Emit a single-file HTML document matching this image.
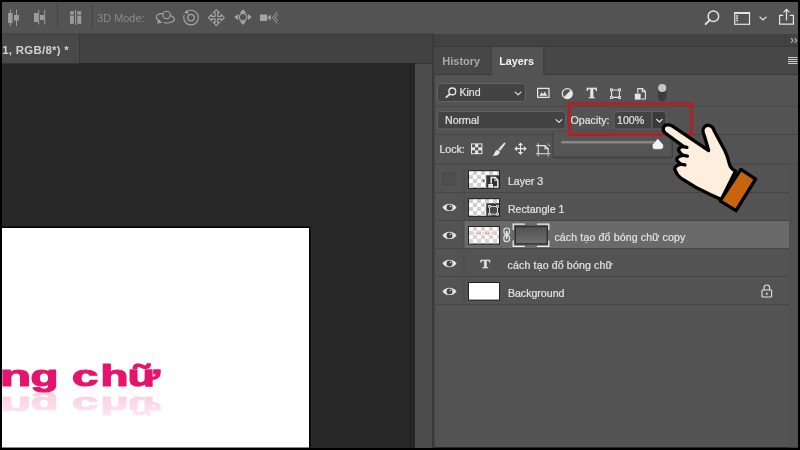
<!DOCTYPE html>
<html><head><meta charset="utf-8"><title>Layers</title>
<style>
html,body{margin:0;padding:0;background:#000;overflow:hidden}
body{width:800px;height:450px;position:relative;font-family:"Liberation Sans",sans-serif}
svg{position:absolute;left:0;top:0;display:block;will-change:transform}
text{font-family:"Liberation Sans",sans-serif;vector-effect:non-scaling-stroke}
.ui{font-size:10.6px;fill:#e4e4e4;stroke:#e4e4e4;stroke-width:0.200px}
.b{font-weight:bold}
</style></head><body>
<svg width="800" height="450" viewBox="0 0 800 450">
<defs>
<pattern id="chk" width="8" height="8" patternUnits="userSpaceOnUse" x="473" y="171">
<rect width="8" height="8" fill="#fff"/><rect width="4" height="4" fill="#cfcfcf"/><rect x="4" y="4" width="4" height="4" fill="#cfcfcf"/>
</pattern>
<pattern id="chkp" width="8" height="8" patternUnits="userSpaceOnUse" x="473" y="227">
<rect width="8" height="8" fill="#fffdfd"/><rect width="4" height="4" fill="#d9d3d4"/><rect x="4" y="4" width="4" height="4" fill="#d9d3d4"/>
</pattern>
<linearGradient id="mg" x1="0" y1="0" x2="0" y2="1"><stop offset="0" stop-color="#525252"/><stop offset="1" stop-color="#6e6e6e"/></linearGradient>
<linearGradient id="rf" x1="0" y1="0" x2="0" y2="1"><stop offset="0" stop-color="#fff" stop-opacity="0"/><stop offset="1" stop-color="#fff" stop-opacity="0.550"/></linearGradient>
<g id="eye"><path d="M-7 0 C-4.200-4.900 4.200-4.900 7 0 C4.200 4.900-4.200 4.900-7 0Z" fill="#e4e4e4"/><circle r="2.900" fill="#454545"/><circle cx="0.900" cy="-1" r="0.800" fill="#d0d0d0"/></g>
</defs>
<!-- frame -->
<rect width="800" height="450" fill="#000"/>
<!-- toolbar -->
<rect x="2" y="2" width="796" height="32" fill="#535353"/>
<!-- doc tab bar -->
<rect x="2" y="34" width="431" height="29.600" fill="#424242"/>
<rect x="2" y="34" width="77" height="29.600" fill="#494949"/>
<rect x="79" y="34" width="1" height="29.600" fill="#3a3a3a"/><rect x="2" y="33.600" width="431" height="1" fill="#3e3e3e"/>
<!-- canvas -->
<rect x="2" y="63.600" width="413" height="384.400" fill="#282828"/><rect x="409" y="63.600" width="6" height="384.400" fill="#242424"/>
<rect x="415" y="63.600" width="17" height="384.400" fill="#4c4c4c"/>
<rect x="432" y="34" width="2" height="414" fill="#3a3a3a"/>
<!-- document -->
<rect x="2" y="226.5" width="308.5" height="221" fill="#000"/>
<rect x="2" y="228" width="307" height="219.5" fill="#fff"/>

<!-- canvas text -->
<clipPath id="docclip"><rect x="2" y="228" width="307" height="219.500"/></clipPath>
<g clip-path="url(#docclip)" font-weight="bold" stroke="#e5146c" stroke-width="1.600" stroke-linejoin="round" style="vector-effect:non-scaling-stroke">
<g fill="#e5146c" opacity="0.190"><text transform="translate(-0.3 397) scale(1.75 -0.880)" font-size="29.5">n</text><text transform="translate(30.62 396.800) scale(1.55 -0.800)" font-size="29.5">g</text><text transform="translate(72.06 396.800) scale(1.6 -0.800)" font-size="29.5">c</text><text transform="translate(100.41 396.800) scale(1.55 -0.800)" font-size="29.5">h</text><text transform="translate(127.86 396.800) scale(1.5 -0.800)" font-size="29.5">ữ</text></g>
<rect x="2" y="396" width="200" height="24" fill="url(#rf)" stroke="none"/>
<g fill="#e5146c"><text transform="translate(-0.3 385.600) scale(1.75 1)" font-size="29.5">n</text><text transform="translate(30.62 385.600) scale(1.55 1)" font-size="29.5">g</text><text transform="translate(72.06 385.600) scale(1.6 1)" font-size="29.5">c</text><text transform="translate(100.41 385.600) scale(1.55 1)" font-size="29.5">h</text><text transform="translate(127.86 385.600) scale(1.5 1)" font-size="29.5">ữ</text></g>
</g>
<!-- panel -->
<rect x="434" y="34" width="364" height="12" fill="#424242"/>
<rect x="434" y="46" width="364" height="28.500" fill="#474747"/>
<rect x="434" y="46" width="364" height="1" fill="#393939"/>
<rect x="434" y="74.5" width="364" height="373" fill="#535353"/>
<rect x="491" y="47" width="52.5" height="28" fill="#535353"/>
<rect x="490.5" y="47" width="1" height="27.5" fill="#3b3b3b"/>
<rect x="543.5" y="47" width="1" height="27.5" fill="#3b3b3b"/>

<!-- toolbar icons -->
<g fill="#9c9c9c">
<rect x="8" y="13" width="4.6" height="10"/><rect x="9.9" y="9.5" width="1" height="16.5"/>
<rect x="14" y="15" width="5" height="5.6"/><rect x="16" y="9.5" width="1" height="16.5"/>
<rect x="34" y="13" width="4" height="9"/><rect x="38.2" y="10" width="1" height="14.5"/>
<rect x="40" y="15" width="4" height="5"/><rect x="44.2" y="10" width="1" height="14.5"/>
<rect x="70" y="11.3" width="3.8" height="3.2"/><rect x="70" y="15.6" width="3.8" height="8.2"/>
<rect x="75.1" y="10" width="1" height="15"/>
<rect x="77.3" y="11.3" width="3.9" height="3.2"/><rect x="77.3" y="15.6" width="3.9" height="8.2"/>
</g>
<rect x="57" y="4" width="1" height="25" fill="#454545"/>
<rect x="92" y="4" width="1" height="25" fill="#454545"/>
<text x="97.300" y="21.600" font-size="10.900" fill="#8a8a8a">3D Mode:</text>
<!-- 3D icons -->
<g fill="none" stroke="#a4a4a4" stroke-width="1.100" stroke-linecap="round" stroke-linejoin="round">
<circle cx="166.600" cy="14.900" r="3.700"/>
<path d="M163 13.800 C158.400 13 155 15.800 156.800 18.800 L159.600 21"/>
<path d="M164 22.700 C168.500 23.600 174.600 22 174.300 19.200 C174.200 17.600 172.400 16.200 170.300 15.600"/>
<circle cx="191" cy="17.600" r="7.300" stroke-dasharray="41.500 4.400" stroke-dashoffset="-29.500"/><circle cx="191" cy="17.600" r="3.300" stroke-width="1.300"/>
<path transform="translate(216.500 17.600) scale(1.120) translate(-216 -17)" d="M208.800 17 l2.800-2.800 v1.700 h3.200 v-3.200 h-1.700 l2.800-2.800 l2.800 2.800 h-1.700 v3.200 h3.200 v-1.700 l2.800 2.800 l-2.800 2.800 v-1.700 h-3.200 v3.200 h1.700 l-2.800 2.800 l-2.800-2.800 h1.700 v-3.200 h-3.200 v1.700z" stroke-width="1"/>
<circle cx="243" cy="17.100" r="3.700" stroke-width="1.200"/>
<path d="M272.600 17.600 L277 11.900 M272.600 17.600 L277 23.300 M275.200 17.600 l2.400-3.100 M275.200 17.600 l2.400 3.100" stroke-width="0.900"/>
</g>
<g fill="#a4a4a4">
<path d="M157.400 23.800 l0.400-4.600 l4.400 3.400z"/>
<path d="M184 12.400 l3.800-2.600 l0.300 4.200z"/>
<path d="M243 9.200 l3.300 3.800 h-6.600z M243 25 l3.300-3.800 h-6.600z M234.200 17.100 l3.900-3.200 v6.400z M251.800 17.100 l-3.900-3.200 v6.400z"/>
<rect x="260" y="14.400" width="7.200" height="6.500" rx="0.600"/><path d="M267.400 17.600 l3.400-2.900 v5.800z"/>
</g>
<!-- right toolbar icons -->
<g fill="none" stroke="#e4e4e4" stroke-width="1.500" stroke-linecap="round" stroke-linejoin="round">
<circle cx="713.400" cy="16.200" r="5.300"/><path d="M709.600 20.200 L705.600 24.200" stroke-width="1.900"/>
<rect x="734.700" y="13.300" width="14.800" height="11" stroke-width="1.200" stroke-linejoin="miter"/>
<path d="M760 17.200 l3 2.700 l3-2.700" stroke-width="1.200"/>
<path d="M783.200 15.300 h-3.600 v8.800 h13.800 v-8.800 h-3.600 M786.500 20.400 v-10.600 M783.600 12.400 l2.900-3 l2.900 3" stroke-width="1.200" stroke-linecap="butt" stroke-linejoin="miter"/>
</g>
<g fill="#e4e4e4"><rect x="734.100" y="12" width="16" height="1.800"/><rect x="736.200" y="15.200" width="1.900" height="1.500"/><rect x="736.200" y="17.500" width="1.900" height="1.500"/><rect x="736.200" y="19.800" width="1.900" height="1.500"/></g>
<!-- doc tab text -->
<text x="2.200" y="53.600" font-size="11.400" font-weight="bold" fill="#d2d2d2" letter-spacing="0.300">1, RGB/8*) *</text>
<!-- panel header icons -->
<path d="M791 38.200 l2.200 2.300 l-2.200 2.300 M794.600 38.200 l2.200 2.300 l-2.200 2.300" fill="none" stroke="#b0b0b0" stroke-width="1.100"/>
<g fill="#cdcdcd"><rect x="788" y="57" width="9.500" height="1"/><rect x="788" y="59" width="9.500" height="1"/><rect x="788" y="61" width="9.500" height="1"/><rect x="788" y="63" width="9.500" height="1"/></g>
<text x="442.300" y="65.300" font-size="11" font-weight="bold" fill="#a9a9a9">History</text>
<text x="499.200" y="65.300" font-size="10.800" font-weight="bold" fill="#f4f4f4">Layers</text>

<!-- filter row -->
<rect x="434" y="106" width="364" height="1" fill="#484848"/>
<rect x="437.5" y="83.5" width="88" height="18" rx="3" fill="#434343" stroke="#636363" stroke-width="1"/>
<g fill="none" stroke="#e6e6e6" stroke-linecap="round" stroke-linejoin="round">
<circle cx="452.3" cy="91.4" r="3.4" stroke-width="1.4"/><path d="M449.8 94.2 L446.4 97.2" stroke-width="1.8"/>
<path d="M515.200 92.200 l2.900 2.700 l2.900-2.700" stroke-width="1.100"/>
</g>
<text x="459.400" y="95.800" class="ui" font-size="11">Kind</text>
<!-- filter icons -->
<g fill="none" stroke="#e6e6e6" stroke-width="1.2" stroke-linejoin="round">
<rect x="537.600" y="88.400" width="11.400" height="9"/>
<circle cx="567.3" cy="93.6" r="5"/>
<rect x="611.6" y="90" width="7.8" height="7.4" stroke-width="1.1"/>
<path d="M637.800 93 v-4.400 h4.600 l3 3 v7.400 h-4.600 M642.200 88.800 v3 h3" stroke-width="1.100" stroke-linejoin="miter"/>
</g>
<g fill="#e6e6e6">
<path d="M539.400 95.800 l2.200-3.600 l1.600 2 l1.400-2.600 l2.600 4.200z"/>
<path d="M570.9 90.1 A5 5 0 0 1 563.8 97.2z"/>
<rect x="610" y="88.4" width="2.8" height="2.8"/><rect x="618.2" y="88.4" width="2.8" height="2.8"/><rect x="610" y="96.2" width="2.8" height="2.8"/><rect x="618.2" y="96.2" width="2.8" height="2.8"/>
<rect x="634.800" y="93.600" width="5.800" height="6"/>
</g>
<g fill="#535353"><rect x="610.9" y="89.3" width="1" height="1"/><rect x="619.1" y="89.3" width="1" height="1"/><rect x="610.9" y="97.1" width="1" height="1"/><rect x="619.1" y="97.1" width="1" height="1"/></g>
<text transform="translate(586.700 98) scale(1.080 1)" style="font-family:'Liberation Serif',serif" font-weight="bold" font-size="14.200" fill="#e6e6e6" stroke="#e6e6e6" stroke-width="0.500">T</text>
<rect x="658" y="84.4" width="8.4" height="16.6" rx="4.2" fill="#3c3c3c"/>
<circle cx="662.2" cy="88" r="4.1" fill="#c6c6c6"/>
<!-- blend row -->
<rect x="437.5" y="111.5" width="128" height="17.5" rx="3" fill="#434343" stroke="#636363" stroke-width="1"/>
<text x="445" y="123.900" class="ui" font-size="11">Normal</text>
<path d="M556 119.600 l2.900 2.700 l2.900-2.700" fill="none" stroke="#e6e6e6" stroke-width="1.100" stroke-linecap="round" stroke-linejoin="round"/>
<text x="570.600" y="123.900" class="ui" font-size="11">Opacity:</text>
<path d="M617 111.5 h35 v17.5 h-35 a3 3 0 0 1 -3 -3 v-11.5 a3 3 0 0 1 3 -3z" fill="#434343" stroke="#636363"/>
<path d="M652 111.5 h11 a3 3 0 0 1 3 3 v11.5 a3 3 0 0 1 -3 3 h-11z" fill="#3a3a3a" stroke="#636363"/>
<text x="617" y="123.900" class="ui" font-size="11">100%</text>
<path d="M656.600 119.400 l2.800 2.600 l2.800-2.600" fill="none" stroke="#f0f0f0" stroke-width="1.100" stroke-linecap="round" stroke-linejoin="round"/>
<rect x="434" y="134" width="364" height="1" fill="#454545"/>
<!-- lock row -->
<text x="439.4" y="153.2" class="ui" font-size="11">Lock:</text>
<g fill="#e6e6e6">
<rect x="471" y="143.4" width="11.4" height="10.8"/>
</g>
<g fill="#535353"><rect x="472" y="144.4" width="3.1" height="2.9"/><rect x="478.2" y="144.4" width="3.2" height="2.9"/><rect x="475.1" y="147.3" width="3.1" height="3"/><rect x="472" y="150.3" width="3.1" height="2.9"/><rect x="478.2" y="150.3" width="3.2" height="2.9"/></g>
<g fill="#e6e6e6">
<path d="M504.300 142.600 l1.300 1 l-5.400 7.200 l-2-1.500z"/>
<path d="M497.600 149.800 l2.200 1.700 c0.200 3.200 -3.600 4.800 -7.200 4.200 c2.200-1.200 1.600-4.600 5-5.900z"/>
<path d="M520.500 142.500 l2.600 2.800 h-2 v2.8 h2.8 v-2 l2.8 2.6 l-2.8 2.6 v-2 h-2.8 v2.8 h2 l-2.6 2.8 l-2.6-2.8 h2 v-2.800 h-2.8 v2 l-2.800-2.6 l2.800-2.6 v2 h2.800 v-2.800 h-2z"/>
</g>
<g fill="none" stroke="#e6e6e6" stroke-width="1.2">
<path d="M538.200 145.600 h6.800 l3.200 3.200 v5 h-10z M545 145.600 v3.200 h3.200" stroke-width="1.100" stroke-linejoin="miter"/><path d="M535.800 145.600 h2 M538.200 143.400 v1.800 M548.200 143.600 v1.200 M549 145.600 h1.200 M535.800 153.800 h2 M538.200 154.600 v1.600 M548.200 154.600 v1.600 M549 153.800 h1.400" stroke-width="1"/>
</g>
<rect x="434" y="163.600" width="364" height="1" fill="#444"/>

<!-- layers list -->
<rect x="464" y="221" width="325" height="27.500" fill="#6a6a6a"/>
<g fill="#454545">
<rect x="434" y="192" width="355" height="1"/><rect x="434" y="220" width="355" height="1"/><rect x="434" y="248" width="355" height="1"/><rect x="434" y="276" width="355" height="1"/><rect x="434" y="304" width="355" height="1"/>
<rect x="463.500" y="164" width="1" height="140.500" fill="#4a4a4a"/>
<rect x="434" y="74.500" width="1" height="373"/>
<rect x="789" y="164" width="1" height="283" fill="#4e4e4e"/>
</g>
<rect x="789.500" y="164" width="8.500" height="283.500" fill="#515151"/>
<!-- visibility box -->
<rect x="443" y="173.200" width="11.600" height="11.400" fill="#4f4f4f" stroke="#474747" stroke-width="1"/>
<use href="#eye" x="449.500" y="207.400"/><use href="#eye" x="449.500" y="235.400"/><use href="#eye" x="449.500" y="263.500"/><use href="#eye" x="449.500" y="291.400"/>
<!-- thumbs -->
<rect x="468" y="170.200" width="32" height="18.600" fill="#222"/><rect x="469" y="171.200" width="30" height="16.600" fill="url(#chk)"/>
<rect x="486.300" y="175.300" width="12.700" height="12.500" fill="#333"/>
<path d="M491.200 183.600 V177.500 h4 l2.600 2.600 v6.800 h-4.200" fill="none" stroke="#ececec" stroke-width="1.500"/><path d="M494.800 177.600 v3 h3" fill="none" stroke="#ececec" stroke-width="0.800"/>
<rect x="488.300" y="184" width="4.700" height="3.700" fill="#ececec"/>
<path d="M482 179.200 l2.600 1 l-0.600 2z" fill="#444"/>
<rect x="468" y="198.200" width="32" height="18.600" fill="#222"/><rect x="469" y="199.200" width="30" height="16.600" fill="url(#chk)"/>
<rect x="486.300" y="203.300" width="12.700" height="12.500" fill="#333"/>
<rect x="489.500" y="206.400" width="8" height="7.800" fill="#4a4a4a" stroke="#ececec" stroke-width="0.900"/>
<g fill="#ececec"><rect x="488.100" y="205" width="2.800" height="2.800" rx="0.800"/><rect x="496.100" y="205" width="2.800" height="2.800" rx="0.800"/><rect x="488.100" y="212.800" width="2.800" height="2.800" rx="0.800"/><rect x="496.100" y="212.800" width="2.800" height="2.800" rx="0.800"/></g>
<g fill="#333"><rect x="489" y="205.900" width="1" height="1"/><rect x="497" y="205.900" width="1" height="1"/><rect x="489" y="213.700" width="1" height="1"/><rect x="497" y="213.700" width="1" height="1"/></g>
<rect x="468" y="226" width="32" height="18.600" fill="#222"/><rect x="469" y="227" width="30" height="16.600" fill="url(#chkp)"/>
<path d="M473 233.200 h20" stroke="#e0708f" stroke-width="0.700" stroke-dasharray="2 1"/>
<!-- chain -->
<g fill="none" stroke="#e2e2e2" stroke-width="1.200"><rect x="503.900" y="228" width="5.700" height="6.400" rx="2.700"/><rect x="503.900" y="235.200" width="5.700" height="6.400" rx="2.700"/><path d="M506.750 231.600 v6.400" stroke-width="1.900" stroke-linecap="round"/></g>
<!-- mask -->
<rect x="514.600" y="225.800" width="33.400" height="18.800" fill="#303030"/>
<rect x="516" y="227.200" width="30.600" height="16" fill="url(#mg)"/>
<path d="M513.200 230 v-5.800 h11.600 M537 224.200 h11.800 v5.800 M548.800 240.400 v6 h-11.800 M524.800 246.400 h-11.600 v-6" fill="none" stroke="#f2f2f2" stroke-width="1.200"/>
<!-- T -->
<text transform="translate(480.400 267.600) scale(1.080 1)" style="font-family:'Liberation Serif',serif" font-weight="bold" font-size="13.400" fill="#e0e0e0" stroke="#e0e0e0" stroke-width="0.500">T</text>
<rect x="468" y="282" width="32" height="18.600" fill="#222"/><rect x="469" y="283" width="30" height="16.600" fill="#fff"/>
<!-- names -->
<text x="507.900" y="185.300" class="ui">Layer 3</text>
<text x="507.900" y="213.300" class="ui">Rectangle 1</text>
<text x="554.400" y="241.300" class="ui" letter-spacing="0.130">cách tạo đổ bóng chữ copy</text>
<text x="507.600" y="269.300" class="ui" letter-spacing="0.130">cách tạo đổ bóng chữ</text>
<text x="507.900" y="297.300" class="ui">Background</text>
<!-- lock -->
<g fill="none" stroke="#e4e4e4" stroke-width="1.100"><rect x="762" y="290" width="9.600" height="7" rx="0.600"/><path d="M764 290 v-2.200 a2.800 2.800 0 0 1 5.600 0 v2.200"/></g>
<rect x="766" y="292.800" width="1.600" height="1.800" fill="#e4e4e4"/>

<!-- popup slider -->
<rect x="552" y="131.500" width="121" height="27" rx="2" fill="#000" opacity="0.180"/>
<rect x="553" y="131" width="118.600" height="25.600" rx="1.500" fill="#555" stroke="#4a4a4a" stroke-width="0.800"/>
<rect x="561" y="141" width="95" height="2.600" rx="1" fill="#868686"/>
<path d="M657.800 138.400 L663.200 144.400 Q664.400 149.400 660 149.400 H655.600 Q651.200 149.400 652.400 144.400Z" fill="#f4f4f4" stroke="#3a3a3a" stroke-width="0.500"/>
<!-- red box -->
<rect x="569.350" y="103.650" width="122.300" height="31" fill="none" stroke="#bb1c24" stroke-width="2.700"/>
<!-- hand -->
<g transform="translate(650 110) scale(0.24440)" stroke="#000" stroke-width="13.500" stroke-linejoin="round" stroke-linecap="round">
<path d="M70 61 C54 61 48 82 62 94 L138 150 C122 150 112 160 120 170 C124 178 132 184 138 186 C118 188 104 196 112 208 C116 216 122 220 128 222 C108 226 96 236 104 248 C108 262 118 272 128 280 C160 302 210 330 251 348 L292 366 L350 250 C338 244 328 234 324 218 C320 198 314 182 306 166 L264 88 C258 64 238 58 226 66 C214 74 216 92 222 104 L240 166 L92 66 C84 61 78 60 70 61Z" fill="#fdeedd"/>
<path d="M138 150 L151 153 M138 186 L153 189 M128 222 L143 225" fill="none"/>
<path d="M372 243 L432 283 L352 412 L287 372Z" fill="#c7650e"/>
</g>
</svg>
</body></html>
